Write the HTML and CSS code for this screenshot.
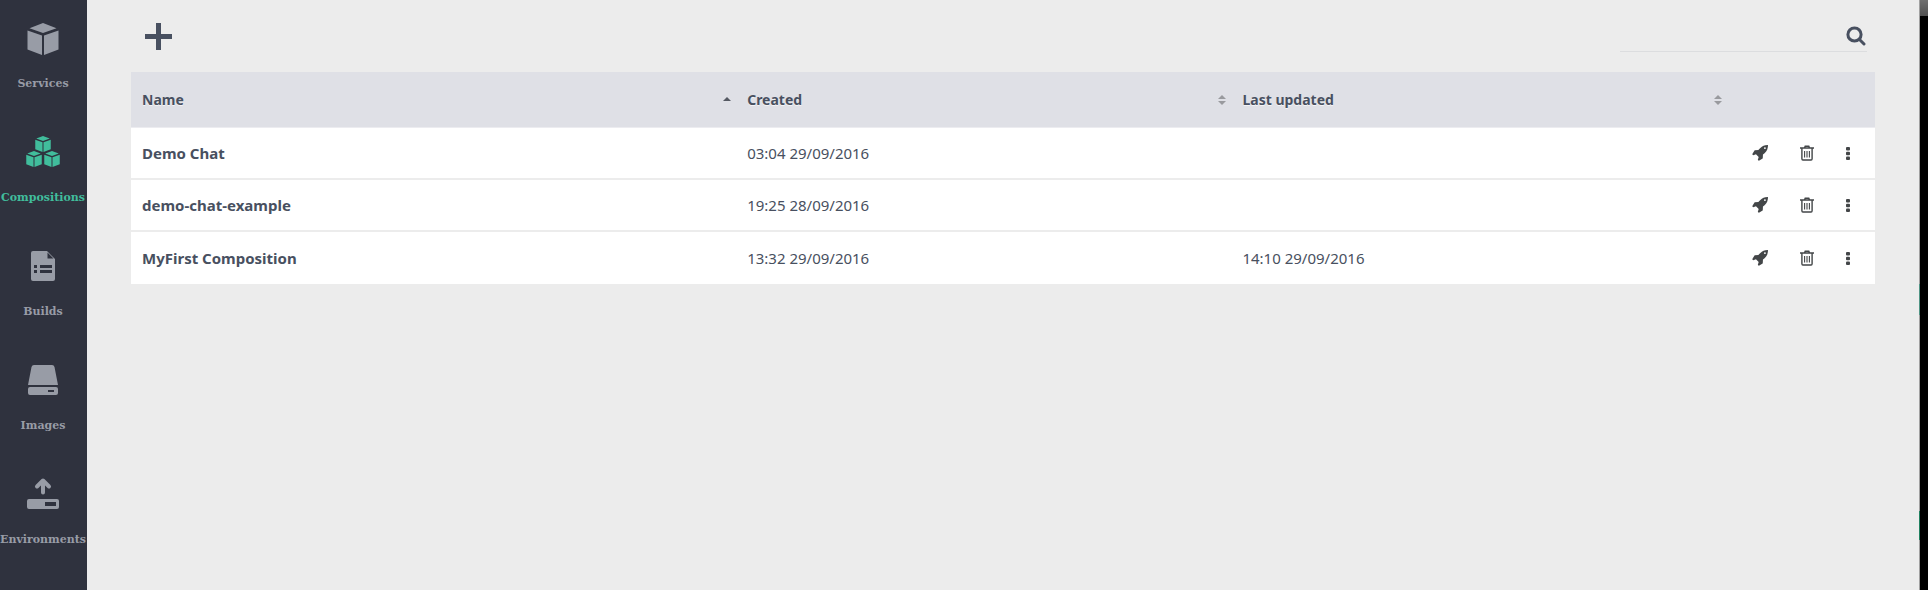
FILE: index.html
```html
<!DOCTYPE html>
<html lang="en">
<head>
<meta charset="utf-8">
<title>Compositions</title>
<link rel="stylesheet" href="styles.css">
</head>
<body>
<svg class="sprite" aria-hidden="true">
  <symbol id="rocket" viewBox="0 128 1664 1664">
    <path d="M1440 448q0-40-28-68t-68-28-68 28-28 68 28 68 68 28 68-28 28-68zm224-288q0 249-75.500 430.500t-253.500 360.500q-81 80-195 176l-20 379q-2 16-16 26l-384 224q-7 4-16 4-12 0-23-9l-64-64q-13-14-8-32l85-276-281-281-276 85q-3 1-9 1-14 0-23-9l-64-64q-17-19-5-39l224-384q10-14 26-16l379-20q96-114 176-195 188-187 358-258t431-71q14 0 24 9.500t10 22.500z"/>
  </symbol>
  <symbol id="trash" viewBox="0 0 14 16">
    <g fill="none" stroke="currentColor">
      <path stroke-width="1.400" d="M0 3h14M4.500 3l.7-1.800h3.600L9.500 3M1.900 3v10.800q0 1.200 1 1.200h8.200q1 0 1-1.200V3"/>
      <path stroke-width="1.100" d="M4.600 6v6.500M7 6v6.500M9.400 6v6.500"/>
    </g>
  </symbol>
  <symbol id="dots" viewBox="0 0 4 13">
    <rect width="4" height="3.400" rx="1"/><rect y="4.800" width="4" height="3.400" rx="1"/><rect y="9.600" width="4" height="3.400" rx="1"/>
  </symbol>
  <symbol id="sort" viewBox="0 0 8 10">
    <path d="M0 4l4-4 4 4zM0 6h8l-4 4z"/>
  </symbol>
  <symbol id="sort-up" viewBox="0 0 8 10">
    <path d="M0 6l4-4 4 4z"/>
  </symbol>
  <symbol id="cube" viewBox="0 0 31 32">
    <path d="M15.500 0L29 5.200 15.500 10 2 5.200zM0 7.400l14.500 5V32L0 26.500zM31 7.400l-14.500 5V32L31 26.500z"/>
  </symbol>
</svg>

<div class="app">
  <nav class="sidebar" aria-label="Main">
    <a class="nav-item" href="#services">
      <svg class="nav-icon" viewBox="0 0 34 34"><use href="#cube" x="1" y="2" width="32" height="32"/></svg>
      <span>Services</span>
    </a>
    <a class="nav-item active" href="#compositions" aria-current="page">
      <svg class="nav-icon" viewBox="0 0 34 34">
        <use href="#cube" x="9" y="1" width="16" height="16"/>
        <use href="#cube" x="0" y="16" width="16" height="16"/>
        <use href="#cube" x="18" y="16" width="16" height="16"/>
      </svg>
      <span>Compositions</span>
    </a>
    <a class="nav-item" href="#builds">
      <svg class="nav-icon" viewBox="0 0 34 34">
        <path fill-rule="evenodd" d="M7 2h14l8 8v20a2 2 0 0 1-2 2H7a2 2 0 0 1-2-2V4a2 2 0 0 1 2-2zM8 16v3h3v-3zM14 16v3h12v-3zM8 21v3h3v-3zM14 21v3h12v-3zM21.500 3.500v6H27.500z"/>
      </svg>
      <span>Builds</span>
    </a>
    <a class="nav-item" href="#images">
      <svg class="nav-icon" viewBox="0 0 34 34">
        <path fill-rule="evenodd" d="M8 2h18q2 0 2.500 2L32 22H2L5.500 4Q6 2 8 2zM4 24h26a2 2 0 0 1 2 2v4a2 2 0 0 1-2 2H4a2 2 0 0 1-2-2v-4a2 2 0 0 1 2-2zM22 27v2h6v-2z"/>
      </svg>
      <span>Images</span>
    </a>
    <a class="nav-item" href="#environments">
      <svg class="nav-icon" viewBox="0 0 34 34">
        <path fill="none" stroke="currentColor" stroke-width="4" stroke-linecap="round" stroke-linejoin="round" d="M17 15.500V4M11 9.500L17 3.500l6 6"/>
        <path fill-rule="evenodd" d="M3 22h28a2 2 0 0 1 2 2v6a2 2 0 0 1-2 2H3a2 2 0 0 1-2-2v-6a2 2 0 0 1 2-2zM19 25v4h11v-4z"/>
      </svg>
      <span>Environments</span>
    </a>
  </nav>

  <main class="content">
    <div class="toolbar">
      <button class="add" type="button" aria-label="Add composition">
        <svg viewBox="0 0 27 27"><path d="M11 0h5v11h11v5H16v11h-5V16H0v-5h11z"/></svg>
      </button>
      <label class="search">
        <input type="search" aria-label="Search">
        <svg viewBox="0 0 20 20"><g fill="none" stroke="currentColor" stroke-width="3"><circle cx="8.500" cy="8.500" r="6.600"/><path stroke-linecap="round" d="M13.500 13.500l4.500 4.500"/></g></svg>
      </label>
    </div>

    <table class="list">
      <colgroup><col class="col-name"><col class="col-date"><col class="col-date"><col></colgroup>
      <thead>
        <tr>
          <th scope="col" aria-sort="ascending"><button class="sort" type="button">Name <svg class="sorted"><use href="#sort-up"/></svg></button></th>
          <th scope="col"><button class="sort" type="button">Created <svg><use href="#sort"/></svg></button></th>
          <th scope="col"><button class="sort" type="button">Last updated <svg><use href="#sort"/></svg></button></th>
          <td></td>
        </tr>
      </thead>
      <tbody>
        <tr>
          <th scope="row">Demo Chat</th><td>03:04 29/09/2016</td><td></td>
          <td><div class="actions">
            <button type="button" aria-label="Deploy"><svg class="rocket"><use href="#rocket"/></svg></button>
            <button type="button" aria-label="Delete"><svg class="trash"><use href="#trash"/></svg></button>
            <button type="button" aria-label="More"><svg class="dots"><use href="#dots"/></svg></button>
          </div></td>
        </tr>
        <tr>
          <th scope="row">demo-chat-example</th><td>19:25 28/09/2016</td><td></td>
          <td><div class="actions">
            <button type="button" aria-label="Deploy"><svg class="rocket"><use href="#rocket"/></svg></button>
            <button type="button" aria-label="Delete"><svg class="trash"><use href="#trash"/></svg></button>
            <button type="button" aria-label="More"><svg class="dots"><use href="#dots"/></svg></button>
          </div></td>
        </tr>
        <tr>
          <th scope="row">MyFirst Composition</th><td>13:32 29/09/2016</td><td>14:10 29/09/2016</td>
          <td><div class="actions">
            <button type="button" aria-label="Deploy"><svg class="rocket"><use href="#rocket"/></svg></button>
            <button type="button" aria-label="Delete"><svg class="trash"><use href="#trash"/></svg></button>
            <button type="button" aria-label="More"><svg class="dots"><use href="#dots"/></svg></button>
          </div></td>
        </tr>
      </tbody>
    </table>
  </main>

  <div class="seam"></div>
  <div class="edge"></div>
</div>
</body>
</html>
```

FILE: styles.css
```css
* {
  box-sizing: border-box;
}

body {
  margin: 0;
  background: #ececec;
  color: #485060;
  font: 15px/20px "Noto Sans", "Open Sans", sans-serif;
}

button {
  margin: 0;
  padding: 0;
  border: 0;
  background: none;
  color: inherit;
  font: inherit;
  cursor: pointer;
}

svg {
  display: block;
  fill: currentColor;
}

.sprite {
  display: none;
}

.app {
  display: flex;
  min-height: 100vh;
}

/* Sidebar */
.sidebar {
  display: flex;
  flex: none;
  flex-direction: column;
  gap: 41px;
  width: 87px;
  padding: 21px 1px 0 0;
  background: #2f323e;
}

.nav-item {
  display: flex;
  flex-direction: column;
  align-items: center;
  gap: 19px;
  color: #989ca6;
  font: bold 11px/20px "DejaVu Serif", serif;
  text-decoration: none;
}

.nav-item.active {
  color: #41bd9c;
}

.nav-icon {
  width: 34px;
  height: 34px;
}

/* Content */
.content {
  flex: 1;
  padding: 0 44px;
}

.toolbar {
  display: flex;
  align-items: center;
  justify-content: space-between;
  height: 72px;
  padding: 0 8px 0 14px;
}

.add svg {
  width: 27px;
  height: 27px;
}

.search {
  display: flex;
  align-items: center;
  width: 247px;
  height: 32px;
  padding-right: 1px;
  border-bottom: 1px solid #dcdddf;
}

.search input {
  flex: 1;
  min-width: 0;
  border: 0;
  outline: 0;
  background: none;
  color: inherit;
  font: inherit;
}

.search svg {
  width: 20px;
  height: 20px;
}

/* Table */
.list {
  width: 100%;
  border-collapse: separate;
  border-spacing: 0;
  table-layout: fixed;
}

.col-name {
  width: 34.7%;
}

.col-date {
  width: 28.4%;
}

.list th,
.list td {
  height: 52px;
  padding: 0 11px;
  border-bottom: 2px solid #ececec;
  background: #fff;
  text-align: left;
}

.list thead th,
.list thead td {
  height: 56px;
  border-bottom: 1px solid #ececf0;
  background: #dfe0e6;
}

.list tbody tr:last-child > * {
  border-bottom: 0;
}

.list thead th {
  padding-right: 5px;
}

.sort {
  display: flex;
  align-items: center;
  justify-content: space-between;
  width: 100%;
  font-size: 14px;
  text-shadow: 0 1px 0 #f4f4f6;
}

.sort svg {
  width: 8px;
  height: 10px;
  color: #999a9e;
}

.sort .sorted {
  color: #555962;
}

.list .actions {
  display: flex;
  align-items: center;
  justify-content: flex-end;
  padding-right: 14px;
  color: #434648;
}

.actions button + button {
  margin-left: 32px;
}

.rocket {
  width: 16px;
  height: 16px;
}

.trash {
  width: 14px;
  height: 16px;
}

.dots {
  width: 4px;
  height: 13px;
}

/* Strip of the darker window behind the page */
.seam {
  flex: none;
  width: 1px;
  background:
    linear-gradient(#4f9484, #4f9484) 0 284px / 1px 31px no-repeat,
    linear-gradient(#20805f, #20805f) 0 511px / 1px 29px no-repeat,
    #a0a0a0;
}

.edge {
  flex: none;
  width: 8px;
  background: linear-gradient(#707070, #505050) 0 0 / 100% 16px no-repeat #000;
}
```
